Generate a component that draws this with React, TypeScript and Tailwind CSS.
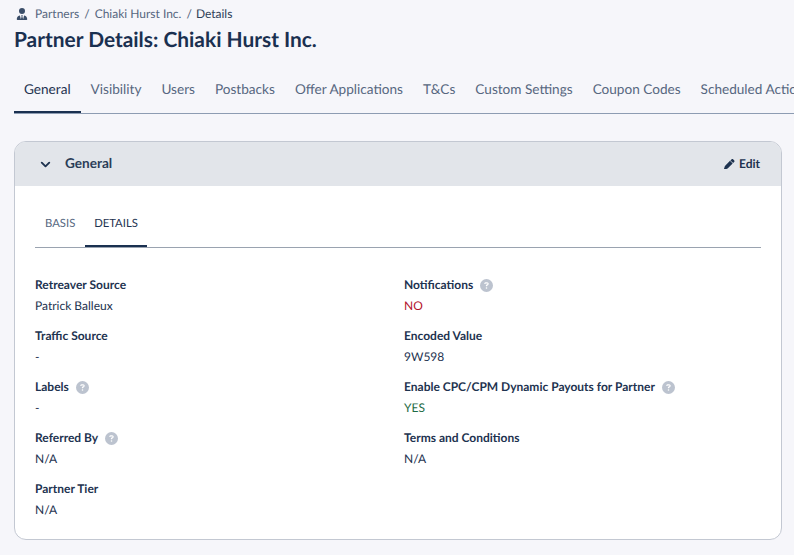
import { ChevronDown } from "lucide-react";
import { FaCircleQuestion, FaPen, FaUserTie } from "react-icons/fa6";

const tabs = ["General", "Visibility", "Users", "Postbacks", "Offer Applications", "T&Cs", "Custom Settings", "Coupon Codes", "Scheduled Actions"];

const Field = ({ label, value, help, valueClass = "text-[#1e3350]" }: { label: string; value: string; help?: boolean; valueClass?: string }) => (
  <div className="h-[51px]">
    <div className="flex items-center h-[20px] text-[12px] font-bold text-[#1e3350]">
      {label}
      {help && <FaCircleQuestion className="ml-[7px] text-[#bcc3cf] text-[13px]" />}
    </div>
    <div className={`h-[22px] flex items-center text-[12px] ${valueClass}`}>{value}</div>
  </div>
);

export default function App() {
  return (
    <div className="w-[794px] h-[555px] overflow-hidden bg-[#f6f6fa] font-['Lato',sans-serif] text-[#1e3350] [text-rendering:geometricPrecision]">
      <div className="flex items-center h-[14px] mt-[7px] pl-[16px] text-[12px] text-[#566780]">
        <FaUserTie className="text-[12px] mr-[7px] text-[#3a4d68]" />
        <span>Partners</span>
        <span className="mx-[5px]">/</span>
        <span>Chiaki Hurst Inc.</span>
        <span className="ml-[5px] mr-[4px]">/</span>
        <span className="text-[#2f4258]">Details</span>
      </div>
      <h1 className="mt-[6px] pl-[14px] h-[26px] leading-[26px] text-[20.9px] font-bold text-[#1a3050] whitespace-nowrap">
        Partner Details: Chiaki Hurst Inc.
      </h1>
      <div className="mt-[20px] ml-[14px] w-[780px] h-[41px] flex border-b border-[#8d9cb2] whitespace-nowrap overflow-hidden">
        {tabs.map((t, i) => (
          <div
            key={t}
            className={`h-[40px] shrink-0 px-[10px] flex items-center text-[13.6px] ${i === 0 ? "pb-[5px] border-b-2 border-[#1a3050] text-[#1e3350]" : "pb-[7px] text-[#566780]"}`}
          >
            {t}
          </div>
        ))}
      </div>
      <div className="mt-[27px] ml-[14px] w-[768px] h-[399px] rounded-[12px] border border-[#c3c8d2] bg-white overflow-hidden">
        <div className="h-[44px] bg-[#e2e5ea] flex items-center justify-between pl-[23px] pr-[21px]">
          <div className="flex items-center">
            <ChevronDown className="w-[15px] h-[15px] mr-[12px] text-[#1e3350]" strokeWidth={3} />
            <span className="text-[13.6px] leading-[16px] pb-[2px] font-bold text-[#2a3d58]">General</span>
          </div>
          <div className="flex items-center text-[12px] font-bold text-[#1e3350]">
            <FaPen className="text-[10.5px] mr-[4px]" />
            Edit
          </div>
        </div>
        <div className="px-[20px]">
          <div className="mt-[18px] h-[44px] flex border-b border-[#9aa3b0] text-[11.3px]">
            <div className="w-[50px] pl-[10px] pb-[3px] flex items-center text-[#566780]">BASIS</div>
            <div className="w-[62px] h-[43px] pb-[1px] flex items-center justify-center border-b-2 border-[#1a3050] text-[#1e3350]">DETAILS</div>
          </div>
          <div className="mt-[27px] grid grid-cols-[369px_1fr]">
            <div>
              <Field label="Retreaver Source" value="Patrick Balleux" />
              <Field label="Traffic Source" value="-" />
              <Field label="Labels" value="-" help />
              <Field label="Referred By" value="N/A" help />
              <Field label="Partner Tier" value="N/A" />
            </div>
            <div>
              <Field label="Notifications" value="NO" help valueClass="text-[#b3122b]" />
              <Field label="Encoded Value" value="9W598" />
              <Field label="Enable CPC/CPM Dynamic Payouts for Partner" value="YES" help valueClass="text-[#1e6b45]" />
              <Field label="Terms and Conditions" value="N/A" />
            </div>
          </div>
        </div>
      </div>
    </div>
  );
}
